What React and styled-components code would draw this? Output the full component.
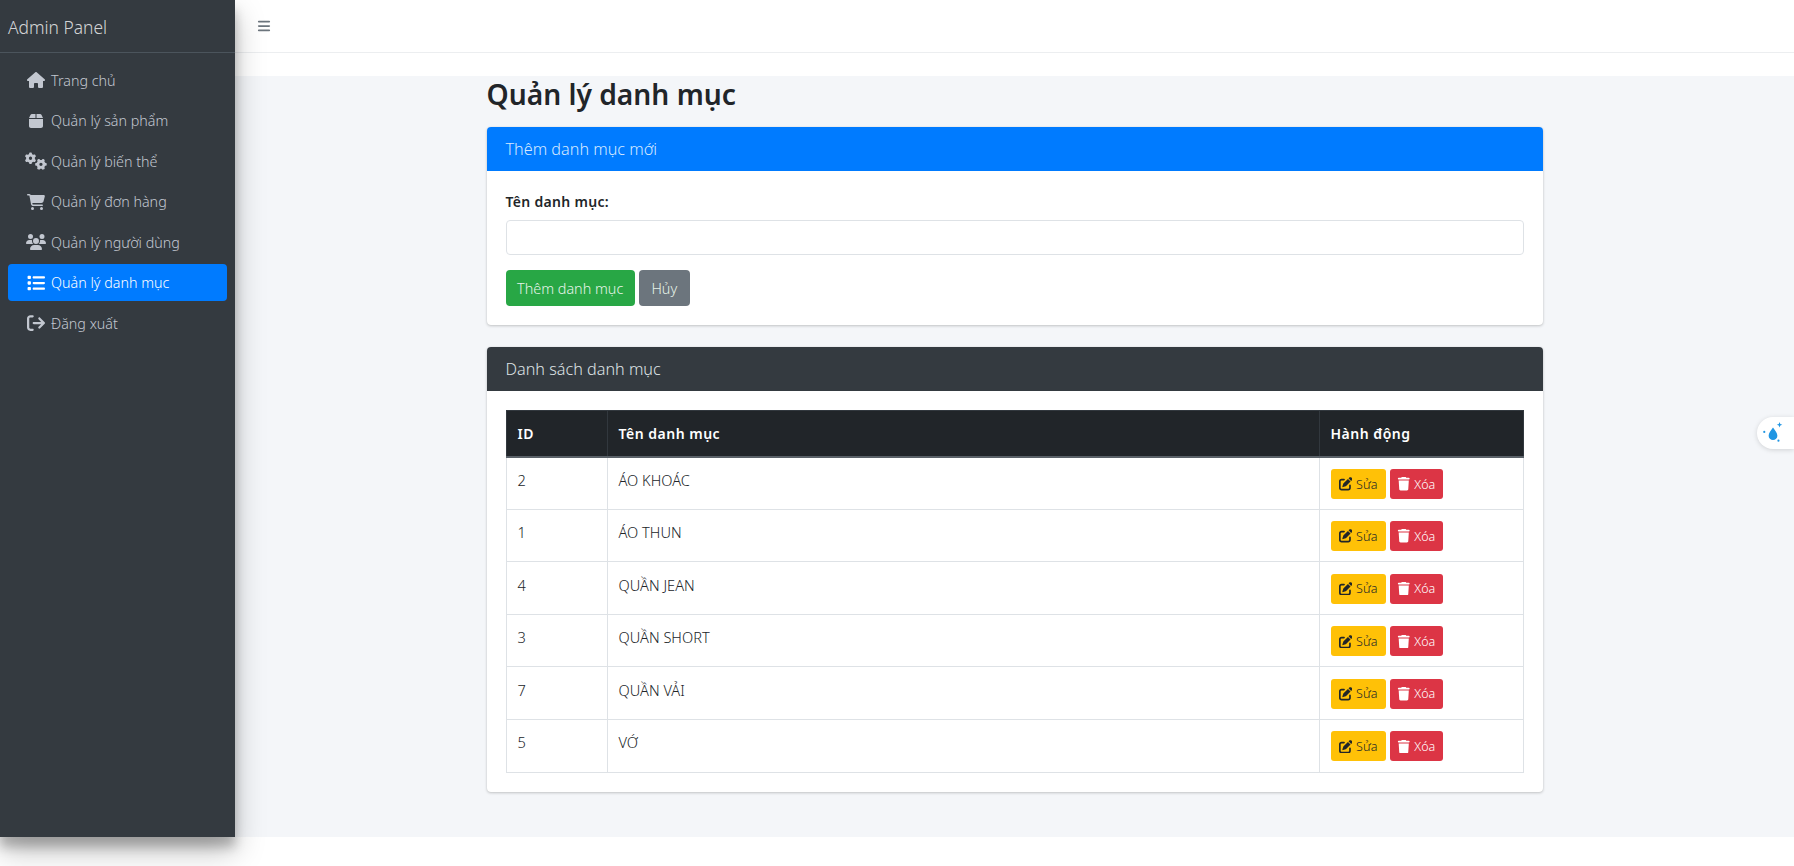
import styled, { createGlobalStyle } from "styled-components";
import {
  FaHouse,
  FaBox,
  FaGears,
  FaCartShopping,
  FaUsers,
  FaList,
  FaArrowRightFromBracket,
  FaPenToSquare,
  FaTrash,
  FaBars,
} from "react-icons/fa6";

const GlobalStyle = createGlobalStyle`
  * { box-sizing: border-box; }
  html, body, #root {
    min-height: 100vh;
  }
  body {
    margin: 0;
    background: #fff;
    color: #212529;
    font-family: "Noto Sans", "Open Sans", sans-serif;
    font-size: 14.6px;
  }
`;

const Wrapper = styled.div`
  display: flex;
  height: 837px;
`;

const Sidebar = styled.aside`
  width: 235px;
  flex-shrink: 0;
  background: #343a40;
  box-shadow: 0 14px 28px rgba(0, 0, 0, 0.25), 0 10px 10px rgba(0, 0, 0, 0.22);
  position: relative;
  z-index: 2;
`;

const Brand = styled.div`
  height: 53px;
  padding: 2px 8px 0;
  display: flex;
  align-items: center;
  border-bottom: 1px solid #4b545c;
  color: rgba(255, 255, 255, 0.8);
  font-size: 17.4px;
  font-weight: 300;
`;

const Nav = styled.nav`
  display: flex;
  flex-direction: column;
  gap: 3.5px;
  padding: 8px 8px 0;
`;

const NavItem = styled.a`
  height: 37px;
  padding-top: 1px;
  display: flex;
  align-items: center;
  border-radius: 4px;
  color: ${(p) => (p.$active ? "#fff" : "#c2c7d0")};
  background: ${(p) => (p.$active ? "#007bff" : "transparent")};
  font-size: 14.3px;
  font-weight: 300;
`;

const NavIcon = styled.span`
  width: 43px;
  padding-left: 12px;
  display: flex;
  justify-content: center;
  flex-shrink: 0;

  svg {
    height: ${(p) => p.$size || 18}px;
    width: auto;
  }
`;

const Content = styled.div`
  flex: 1;
  min-width: 0;
  display: flex;
  flex-direction: column;
`;

const TopBar = styled.header`
  height: 53px;
  padding-left: 22px;
  display: flex;
  align-items: center;
  border-bottom: 1px solid #eceef0;
  color: #6c757d;
  font-size: 14px;
  flex-shrink: 0;
`;

const Spacer = styled.div`
  height: 23px;
  flex-shrink: 0;
`;

const Main = styled.main`
  flex: 1;
  background: #f4f6f9;
  display: flex;
  justify-content: center;
`;

const Container = styled.div`
  width: 1056px;
`;

const Title = styled.h1`
  margin: 0;
  height: 51px;
  padding-bottom: 15px;
  display: flex;
  align-items: center;
  font-size: 28.2px;
  font-weight: 600;
  color: #212529;
`;

const Card = styled.section`
  background: #fff;
  border-radius: 4px;
  box-shadow: 0 0 1px rgba(0, 0, 0, 0.125), 0 1px 3px rgba(0, 0, 0, 0.2);
  margin-bottom: 22px;
  overflow: hidden;
`;

const CardHeader = styled.div`
  height: 44px;
  padding: 0 19px;
  display: flex;
  align-items: center;
  color: ${(p) => (p.$dark ? "#dfe2e5" : "#d5e8ff")};
  background: ${(p) => (p.$dark ? "#343a40" : "#007bff")};
  font-size: 16.2px;
  font-weight: 300;
`;

const CardBody = styled.div`
  padding: 19px;
`;

const Label = styled.label`
  display: block;
  padding-top: 1px;
  font-weight: 600;
  font-size: 14px;
  letter-spacing: 0.3px;
  line-height: 22px;
  margin-bottom: 7px;
`;

const Input = styled.input`
  display: block;
  width: 100%;
  height: 35px;
  border: 1px solid #dee2e6;
  border-radius: 4px;
  background: #fff;
  margin-bottom: 15px;
`;

const ButtonRow = styled.div`
  display: flex;
  gap: 4px;
`;

const Button = styled.button`
  height: 36px;
  min-width: 51px;
  padding: 0 11.5px;
  border: 0;
  border-radius: 4px;
  color: #e6f3e8;
  background: ${(p) => p.$bg};
  font-family: inherit;
  font-size: 14.4px;
  font-weight: 300;
`;

const Table = styled.table`
  width: 100%;
  table-layout: fixed;
  border-collapse: collapse;
  font-weight: 300;
`;

const Th = styled.th`
  height: 46px;
  width: ${(p) => p.$width || "auto"};
  padding: 0 11px;
  text-align: left;
  color: #fff;
  background: #212529;
  border: 1px solid #32383e;
  border-bottom: 2px solid #5a6168;
  font-size: 14px;
  font-weight: 600;
  letter-spacing: 0.5px;
`;

const Td = styled.td`
  height: 52.6px;
  padding: 12.5px 11px 0;
  vertical-align: top;
  border: 1px solid #dee2e6;
`;

const ActionTd = styled(Td)`
  padding-top: 11.5px;
`;

const ActionCell = styled.div`
  display: flex;
  gap: 4px;
`;

const SmallButton = styled.button`
  height: 30px;
  width: ${(p) => p.$width};
  padding: 0;
  display: flex;
  align-items: center;
  justify-content: center;
  gap: 4px;
  border: 0;
  border-radius: 3px;
  color: ${(p) => p.$color};
  background: ${(p) => p.$bg};
  font-family: inherit;
  font-size: 12.5px;
  font-weight: 300;

  svg {
    height: 13.5px;
    width: auto;
  }
`;

const FloatTab = styled.div`
  position: fixed;
  right: 0;
  top: 417px;
  width: 37px;
  height: 32px;
  padding-left: 4px;
  display: flex;
  align-items: center;
  background: #fff;
  border-radius: 16px 0 0 16px;
  box-shadow: 0 1px 5px rgba(0, 0, 0, 0.15);
`;

const navLinks = [
  { icon: <FaHouse />, label: "Trang chủ" },
  { icon: <FaBox />, label: "Quản lý sản phẩm", size: 16 },
  { icon: <FaGears />, label: "Quản lý biến thể", size: 22 },
  { icon: <FaCartShopping />, label: "Quản lý đơn hàng" },
  { icon: <FaUsers />, label: "Quản lý người dùng", size: 20 },
  { icon: <FaList />, label: "Quản lý danh mục", active: true },
  { icon: <FaArrowRightFromBracket />, label: "Đăng xuất" },
];

const categories = [
  { id: 2, name: "ÁO KHOÁC" },
  { id: 1, name: "ÁO THUN" },
  { id: 4, name: "QUẦN JEAN" },
  { id: 3, name: "QUẦN SHORT" },
  { id: 7, name: "QUẦN VẢI" },
  { id: 5, name: "VỚ" },
];

const App = () => {
  return (
    <>
      <GlobalStyle />
      <Wrapper>
        <Sidebar>
          <Brand>Admin Panel</Brand>
          <Nav>
            {navLinks.map((link) => (
              <NavItem key={link.label} $active={link.active}>
                <NavIcon $size={link.size}>{link.icon}</NavIcon>
                {link.label}
              </NavItem>
            ))}
          </Nav>
        </Sidebar>
        <Content>
          <TopBar>
            <FaBars />
          </TopBar>
          <Spacer />
          <Main>
            <Container>
              <Title>Quản lý danh mục</Title>
              <Card>
                <CardHeader>Thêm danh mục mới</CardHeader>
                <CardBody>
                  <Label>Tên danh mục:</Label>
                  <Input />
                  <ButtonRow>
                    <Button $bg="#28a745">Thêm danh mục</Button>
                    <Button $bg="#6c757d">Hủy</Button>
                  </ButtonRow>
                </CardBody>
              </Card>
              <Card>
                <CardHeader $dark>Danh sách danh mục</CardHeader>
                <CardBody>
                  <Table>
                    <thead>
                      <tr>
                        <Th $width="101px">ID</Th>
                        <Th>Tên danh mục</Th>
                        <Th $width="204px">Hành động</Th>
                      </tr>
                    </thead>
                    <tbody>
                      {categories.map((c) => (
                        <tr key={c.id}>
                          <Td>{c.id}</Td>
                          <Td>{c.name}</Td>
                          <ActionTd>
                            <ActionCell>
                              <SmallButton $bg="#ffc107" $color="#212529" $width="55px">
                                <FaPenToSquare />
                                Sửa
                              </SmallButton>
                              <SmallButton $bg="#dc3545" $color="#fff" $width="53px">
                                <FaTrash />
                                Xóa
                              </SmallButton>
                            </ActionCell>
                          </ActionTd>
                        </tr>
                      ))}
                    </tbody>
                  </Table>
                </CardBody>
              </Card>
            </Container>
          </Main>
        </Content>
      </Wrapper>
      <FloatTab>
        <svg width="24" height="24" viewBox="0 0 22 22" fill="#2196e3">
          <path d="M11 6c2 3 4 5 4 7.500a4 4 0 0 1-8 0C7 11 9 9 11 6z" />
          <path d="M17 1l.7 1.800 1.800.7-1.800.7L17 6l-.7-1.800-1.800-.7 1.800-.7z" />
          <circle cx="3" cy="10" r="1" />
          <circle cx="16" cy="18" r="1" />
        </svg>
      </FloatTab>
    </>
  );
};

export default App;
